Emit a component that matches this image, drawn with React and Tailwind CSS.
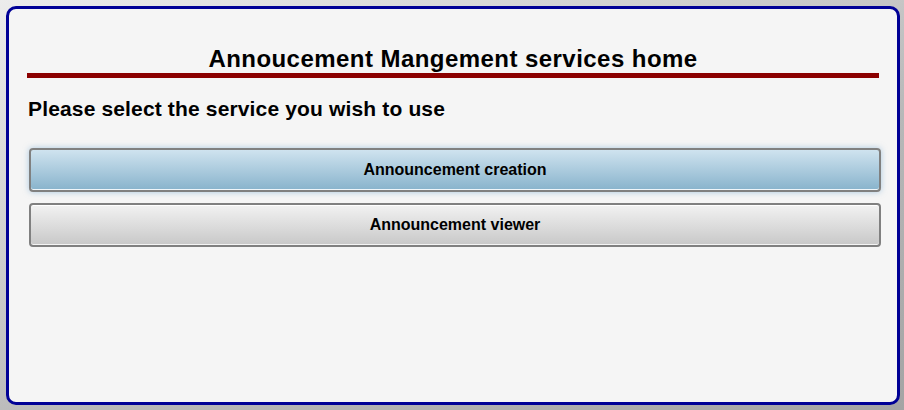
import React from 'react';

const services = [
  { label: 'Announcement creation', active: true },
  { label: 'Announcement viewer', active: false },
];

export default function App() {
  return (
    <div className="h-[410px] w-[904px] pt-[6px] pb-[5px] pl-[6px] pr-[4px] bg-[linear-gradient(160deg,#ececec,#b8b8b8_60%,#a4a4a4)] font-['Liberation_Sans',Arial,sans-serif]">
      <div className="h-full rounded-[10px] border-[3px] border-[#000096] bg-[#f5f5f5] px-[18px] pt-[36px]">
        <h1 className="text-center text-[24px] leading-[28px] tracking-[0.45px] font-bold text-black">
          Annoucement Mangement services home
        </h1>
        <div className="h-[5px] bg-[#8b0000]" />
        <h2 className="mt-[19px] pl-[1px] text-[21px] leading-[24px] tracking-[0.15px] font-bold text-black">
          Please select the service you wish to use
        </h2>
        <div className="mt-[27px] ml-[2px] mr-[-2px] flex flex-col gap-[11px]">
          {services.map(s => (
            <button
              key={s.label}
              className={
                s.active
                  ? 'h-[44px] rounded-[4px] border-2 border-[#808080] bg-[linear-gradient(#cfe3ef,#88b3cc)] text-[16px] font-bold text-black shadow-[0_0_6px_rgba(120,170,210,0.6),inset_0_-1px_0_#f0f6fa]'
                  : 'h-[44px] rounded-[4px] border-2 border-[#808080] bg-[linear-gradient(#f2f2f2,#c8c8c8)] text-[16px] font-bold text-black shadow-[inset_0_1px_0_#ffffff,inset_0_-1px_0_#f4f4f4]'
              }
            >
              {s.label}
            </button>
          ))}
        </div>
      </div>
    </div>
  );
}
